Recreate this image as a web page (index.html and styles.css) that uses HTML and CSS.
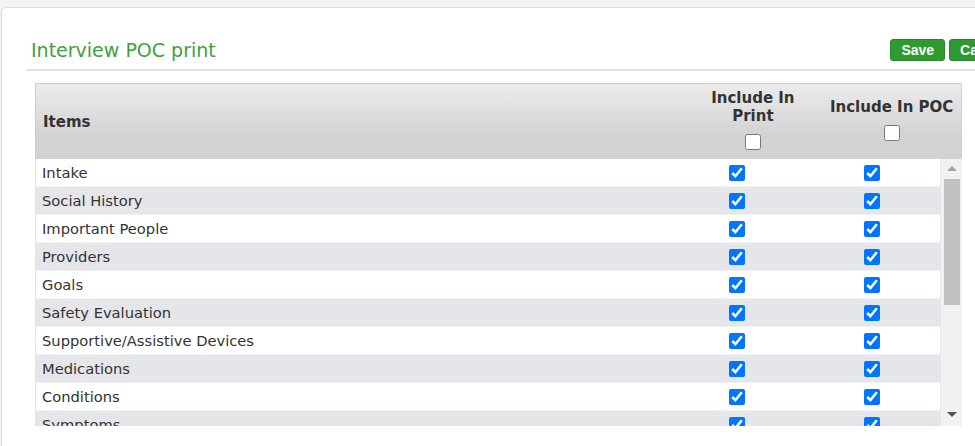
FILE: index.html
```html
<!DOCTYPE html>
<html lang="en">
<head>
<meta charset="UTF-8" />
<meta name="viewport" content="width=device-width, initial-scale=1.0"/>
<title>Interview POC print</title>
<link rel="stylesheet" href="styles.css">
</head>
<body>

<div class="panel">
  <div class="panel-head">
    <h1>Interview POC print</h1>
    <div class="actions">
      <button class="btn">Save</button>
      <button class="btn">Cancel</button>
    </div>
  </div>

  <div class="grid">
    <!-- header -->
    <div class="grid-head">
      <div class="th th-items">Items</div>
      <div class="th th-check">
        <span>Include In<br>Print</span>
        <input type="checkbox" />
      </div>
      <div class="th th-check">
        <span>Include In POC</span>
        <input type="checkbox" />
      </div>
    </div>

    <!-- body with scrollbar -->
    <div class="grid-body">
      <div class="rows">
        <div class="row"><div class="td">Intake</div><div class="td chk"><input type="checkbox" checked /></div><div class="td chk"><input type="checkbox" checked /></div></div>
        <div class="row"><div class="td">Social History</div><div class="td chk"><input type="checkbox" checked /></div><div class="td chk"><input type="checkbox" checked /></div></div>
        <div class="row"><div class="td">Important People</div><div class="td chk"><input type="checkbox" checked /></div><div class="td chk"><input type="checkbox" checked /></div></div>
        <div class="row"><div class="td">Providers</div><div class="td chk"><input type="checkbox" checked /></div><div class="td chk"><input type="checkbox" checked /></div></div>
        <div class="row"><div class="td">Goals</div><div class="td chk"><input type="checkbox" checked /></div><div class="td chk"><input type="checkbox" checked /></div></div>
        <div class="row"><div class="td">Safety Evaluation</div><div class="td chk"><input type="checkbox" checked /></div><div class="td chk"><input type="checkbox" checked /></div></div>
        <div class="row"><div class="td">Supportive/Assistive Devices</div><div class="td chk"><input type="checkbox" checked /></div><div class="td chk"><input type="checkbox" checked /></div></div>
        <div class="row"><div class="td">Medications</div><div class="td chk"><input type="checkbox" checked /></div><div class="td chk"><input type="checkbox" checked /></div></div>
        <div class="row"><div class="td">Conditions</div><div class="td chk"><input type="checkbox" checked /></div><div class="td chk"><input type="checkbox" checked /></div></div>
        <div class="row"><div class="td">Symptoms</div><div class="td chk"><input type="checkbox" checked /></div><div class="td chk"><input type="checkbox" checked /></div></div>
      </div>
      <div class="scrollbar">
        <div class="arrow arrow-up"></div>
        <div class="thumb"></div>
        <div class="arrow arrow-down"></div>
      </div>
    </div>
  </div>
</div>

</body>
</html>
```

FILE: styles.css
```css
body {
  margin: 0;
  padding-top: 7px;
  background-color: #f3f3f3;
  font-family: "DejaVu Sans", Verdana, sans-serif;
  color: #333;
}
.panel {
  margin-left: 1px;
  height: 438px;
  background-color: #fff;
  border: 1px solid #dcdcdc;
  border-right: none;
  border-bottom: none;
  border-radius: 5px 0 0 0;
  overflow: hidden;
}
.panel-head {
  display: flex;
  align-items: flex-end;
  justify-content: space-between;
  margin: 9px 0 0 24px;
  padding: 0 0 7px 5px;
  height: 54px;
  box-sizing: border-box;
  border-bottom: 2px solid #e2e2e2;
}
h1 {
  margin: 0 0 1px 0;
  font-size: 19px;
  font-weight: normal;
  color: #3f9f3f;
}
.actions {
  display: flex;
  gap: 4px;
  margin: 0 -42px 1px 0;
}
.btn {
  height: 22px;
  padding: 0 10px;
  font-family: "Liberation Sans", Arial, sans-serif;
  font-size: 14px;
  font-weight: bold;
  color: #fff;
  background-color: #2f9a2f;
  border: 1px solid #27882a;
  border-radius: 3px;
  cursor: pointer;
}

/* grid */
.grid {
  margin: 12px 13px 0 33px;
}
.grid-head {
  display: grid;
  grid-template-columns: 70% 15% 15%;
  height: 76px;
  background: linear-gradient(#ececec, #d2d2d2 70%, #d2d2d2);
  border: 1px solid #cfcfcf;
  border-bottom: none;
  box-sizing: border-box;
}
.th {
  display: flex;
  align-items: center;
  font-size: 15px;
  font-weight: bold;
  color: #333;
}
.th-items {
  padding-left: 7px;
}
.th-check {
  flex-direction: column;
  justify-content: center;
  text-align: center;
  line-height: 18px;
  padding-bottom: 4px;
}
.th-check input {
  margin: 9px 0 0 0;
}
input[type="checkbox"] {
  width: 16px;
  height: 16px;
}
.grid-body {
  display: flex;
  height: 267px;
  overflow: hidden;
  border-left: 1px solid #e3e3e3;
}
.rows {
  flex: 1;
}
.row {
  display: grid;
  grid-template-columns: 70% 15% 15%;
  height: 28px;
  border-bottom: 1px solid #f2f2f4;
  box-sizing: border-box;
}
.row:nth-child(even) {
  background-color: #e5e6ea;
}
.td {
  display: flex;
  align-items: center;
  padding-left: 6px;
  font-size: 14.7px;
}
.td.chk {
  justify-content: center;
  padding-left: 0;
}
.td.chk input {
  margin: 0;
}

/* scrollbar */
.scrollbar {
  display: flex;
  flex-direction: column;
  align-items: center;
  width: 21px;
  background-color: #f1f1f1;
  border-left: 1px solid #e6e6e6;
}
.arrow {
  width: 0;
  height: 0;
  border-left: 5px solid transparent;
  border-right: 5px solid transparent;
}
.arrow-up {
  margin-top: 7px;
  border-bottom: 5px solid #a3a3a3;
}
.arrow-down {
  margin-top: auto;
  margin-bottom: 9px;
  border-top: 5px solid #505050;
}
.thumb {
  width: 16px;
  height: 126px;
  margin-top: 8px;
  background-color: #c1c1c1;
}
```
